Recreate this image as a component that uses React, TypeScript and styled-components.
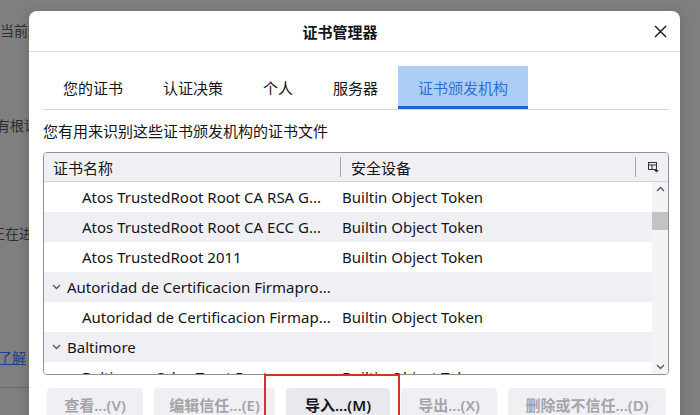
import React from 'react';
import styled, { createGlobalStyle } from 'styled-components';

const GlobalStyle = createGlobalStyle`
  html, body {
    margin: 0;
    padding: 0;
  }
  body {
    width: 700px;
    height: 415px;
    overflow: hidden;
    background: #7f7f7f;
    font-family: "Noto Sans", "Noto Sans CJK SC", sans-serif;
  }
`;

const Screen = styled.div`
  position: relative;
  width: 700px;
  height: 415px;
  overflow: hidden;
  background: #7f7f7f;
`;

/* the page behind the modal, dimmed; only a sliver shows left of the dialog */
const BackPage = styled.div`
  width: 29px;
  overflow: hidden;
  display: flex;
  flex-direction: column;
  padding-top: 20px;
  font-family: "Noto Sans CJK SC", sans-serif;
  font-size: 14px;
  color: #2e2e2e;
`;

const BackLine = styled.div<{ $top: number; $shift: number }>`
  margin-top: ${(p) => p.$top}px;
  margin-left: ${(p) => p.$shift}px;
  line-height: 20px;
  white-space: nowrap;
`;

const BackLink = styled.span`
  color: #213f8c;
  text-decoration: underline;
`;

const BackRule = styled.hr`
  margin: 20px 0 0;
  border: none;
  border-top: 1px solid #6c6c6c;
`;

const Dialog = styled.div`
  position: absolute;
  left: 29px;
  top: 11px;
  width: 651px;
  height: 440px;
  background: #fff;
  border-radius: 8px;
  display: flex;
  flex-direction: column;
  color: #15141a;
  box-shadow: 0 2px 14px rgba(0, 0, 0, 0.18);
`;

const TitleBar = styled.div`
  flex: none;
  height: 40px;
  display: flex;
  align-items: center;
  padding-right: 6px;
  border-bottom: 1px solid #e0e0e6;
`;

const Title = styled.div`
  flex: 1;
  padding-left: 5px;
  text-align: center;
  font-family: "Noto Sans CJK SC", sans-serif;
  font-size: 15px;
  font-weight: 600;
`;

const CloseButton = styled.button`
  width: 28px;
  height: 28px;
  padding: 0;
  border: none;
  background: transparent;
  display: flex;
  align-items: center;
  justify-content: center;
  color: #15141a;
`;

const Body = styled.div`
  flex: 1;
  display: flex;
  flex-direction: column;
  padding: 14px 11px 0 14px;
`;

const TabStrip = styled.div`
  display: flex;
  border-bottom: 1px solid #d7d7db;
`;

const Tab = styled.div<{ $active?: boolean }>`
  height: 43px;
  padding: 0 20px;
  display: flex;
  align-items: center;
  font-family: "Noto Sans CJK SC", sans-serif;
  font-size: 15px;
  color: ${(p) => (p.$active ? '#2f6fd0' : '#15141a')};
  background: ${(p) => (p.$active ? '#abcdf8' : 'transparent')};
  box-shadow: ${(p) => (p.$active ? 'inset 0 -3px 0 #1d63d4' : 'none')};
`;

const Description = styled.div`
  margin-top: 10px;
  line-height: 22px;
  font-family: "Noto Sans CJK SC", sans-serif;
  font-size: 15px;
`;

const Tree = styled.div`
  margin-top: 10px;
  height: 223px;
  box-sizing: border-box;
  border: 1px solid #8f8f9d;
  border-radius: 4px;
  overflow: hidden;
  display: flex;
  flex-direction: column;
`;

const TreeHeader = styled.div`
  flex: none;
  height: 28px;
  display: flex;
  align-items: center;
  background: #f0f0f4;
  border-bottom: 1px solid #d4d4da;
  font-family: "Noto Sans CJK SC", sans-serif;
  font-size: 15px;
`;

const HeaderCell = styled.div<{ $width?: number; $pad: number }>`
  ${(p) => (p.$width ? `width: ${p.$width}px;` : 'flex: 1;')}
  box-sizing: border-box;
  padding-left: ${(p) => p.$pad}px;
  white-space: nowrap;
`;

const HeaderDivider = styled.div`
  flex: none;
  width: 1px;
  height: 20px;
  background: #a9a9b2;
`;

const PickerCell = styled.div`
  width: 30px;
  display: flex;
  justify-content: center;
  padding-left: 2px;
`;

const TreeBody = styled.div`
  flex: 1;
  display: flex;
  min-height: 0;
`;

const RowList = styled.div`
  flex: 1;
  overflow: hidden;
`;

const Row = styled.div<{ $alt: boolean }>`
  height: 30px;
  display: flex;
  align-items: center;
  background: ${(p) => (p.$alt ? '#f0f0f4' : '#fff')};
  font-size: 15px;
  color: #15141a;
`;

const NameCell = styled.div<{ $indent: number }>`
  width: 296px;
  flex: none;
  box-sizing: border-box;
  padding-left: ${(p) => p.$indent}px;
  display: flex;
  align-items: center;
  gap: 6px;
  white-space: nowrap;
  overflow: hidden;
`;

const TokenCell = styled.div`
  flex: 1;
  padding-left: 2px;
  white-space: nowrap;
  overflow: hidden;
`;

const Scrollbar = styled.div`
  width: 16px;
  flex: none;
  display: flex;
  flex-direction: column;
  background: #f3f3f5;
`;

const ScrollArrow = styled.div`
  height: 14px;
  display: flex;
  align-items: center;
  justify-content: center;
`;

const ScrollThumb = styled.div`
  margin-top: 16px;
  height: 18px;
  background: #c3c3c6;
`;

const ScrollGap = styled.div`
  flex: 1;
`;

const ButtonRow = styled.div`
  display: flex;
  gap: 11px;
  margin-top: 13px;
  padding-left: 4px;
`;

const ActionButton = styled.button<{ $enabled?: boolean; $width: number }>`
  flex: none;
  width: ${(p) => p.$width}px;
  height: 32px;
  padding: 0;
  border: none;
  border-radius: 4px;
  background: ${(p) => (p.$enabled ? '#e9e9ed' : '#f0f0f4')};
  color: ${(p) => (p.$enabled ? '#15141a' : '#a4a4aa')};
  font-family: "Noto Sans", "Noto Sans CJK SC", sans-serif;
  font-size: 15px;
  font-weight: 600;
  white-space: nowrap;
`;

const Highlight = styled.div`
  position: absolute;
  left: 264px;
  top: 374px;
  width: 136px;
  height: 60px;
  box-sizing: border-box;
  border: 2px solid #d8302a;
`;

const Chevron = ({ up = false }: { up?: boolean }) => (
  <svg width="9" height="6" viewBox="0 0 9 6">
    <path
      d={up ? 'M1 5 L4.5 1.5 L8 5' : 'M1 1 L4.5 4.5 L8 1'}
      fill="none"
      stroke="#555"
      strokeWidth="1.3"
    />
  </svg>
);

const ColumnPickerIcon = () => (
  <svg width="11" height="11" viewBox="0 0 11 11">
    <rect x="0.5" y="0.5" width="8" height="7" fill="none" stroke="#333" />
    <path d="M0.5 3 H8.5 M4 3 V7.5" stroke="#333" />
    <path d="M6 8 H11 L8.5 10.5 Z" fill="#333" />
  </svg>
);

const tabs = ['您的证书', '认证决策', '个人', '服务器', '证书颁发机构'];

type TreeRow = { name: string; token?: string; parent?: boolean };

const rows: TreeRow[] = [
  { name: 'Atos TrustedRoot Root CA RSA G...', token: 'Builtin Object Token' },
  { name: 'Atos TrustedRoot Root CA ECC G...', token: 'Builtin Object Token' },
  { name: 'Atos TrustedRoot 2011', token: 'Builtin Object Token' },
  { name: 'Autoridad de Certificacion Firmapro...', parent: true },
  { name: 'Autoridad de Certificacion Firmap...', token: 'Builtin Object Token' },
  { name: 'Baltimore', parent: true },
  { name: 'Baltimore CyberTrust Root', token: 'Builtin Object Token' },
];

const buttons = [
  { label: '查看...(V)', width: 96 },
  { label: '编辑信任...(E)', width: 121 },
  { label: '导入...(M)', width: 104, enabled: true },
  { label: '导出...(X)', width: 96 },
  { label: '删除或不信任...(D)', width: 158 },
];

export default function App() {
  return (
    <Screen>
      <GlobalStyle />
      <BackPage>
        <BackLine $top={0} $shift={0}>当前未</BackLine>
        <BackLine $top={75} $shift={-4}>有根证</BackLine>
        <BackLine $top={88} $shift={-9}>正在进</BackLine>
        <BackLine $top={104} $shift={-2}>
          <BackLink>了解</BackLink>
        </BackLine>
        <BackRule />
      </BackPage>

      <Dialog>
        <TitleBar>
          <Title>证书管理器</Title>
          <CloseButton aria-label="关闭">
            <svg width="13" height="13" viewBox="0 0 13 13">
              <path d="M1 1 L12 12 M12 1 L1 12" stroke="#15141a" strokeWidth="1.4" />
            </svg>
          </CloseButton>
        </TitleBar>

        <Body>
          <TabStrip>
            {tabs.map((t, i) => (
              <Tab key={t} $active={i === tabs.length - 1}>
                {t}
              </Tab>
            ))}
          </TabStrip>

          <Description>您有用来识别这些证书颁发机构的证书文件</Description>

          <Tree>
            <TreeHeader>
              <HeaderCell $width={296} $pad={9}>证书名称</HeaderCell>
              <HeaderDivider />
              <HeaderCell $pad={10}>安全设备</HeaderCell>
              <HeaderDivider />
              <PickerCell>
                <ColumnPickerIcon />
              </PickerCell>
            </TreeHeader>
            <TreeBody>
              <RowList>
                {rows.map((r, i) => (
                  <Row key={r.name} $alt={i % 2 === 1}>
                    <NameCell $indent={r.parent ? 8 : 38}>
                      {r.parent && <Chevron />}
                      <span>{r.name}</span>
                    </NameCell>
                    <TokenCell>{r.token}</TokenCell>
                  </Row>
                ))}
              </RowList>
              <Scrollbar>
                <ScrollArrow>
                  <Chevron up />
                </ScrollArrow>
                <ScrollThumb />
                <ScrollGap />
                <ScrollArrow>
                  <Chevron />
                </ScrollArrow>
              </Scrollbar>
            </TreeBody>
          </Tree>

          <ButtonRow>
            {buttons.map((b) => (
              <ActionButton key={b.label} $enabled={b.enabled} $width={b.width}>
                {b.label}
              </ActionButton>
            ))}
          </ButtonRow>
        </Body>
      </Dialog>

      <Highlight />
    </Screen>
  );
}
